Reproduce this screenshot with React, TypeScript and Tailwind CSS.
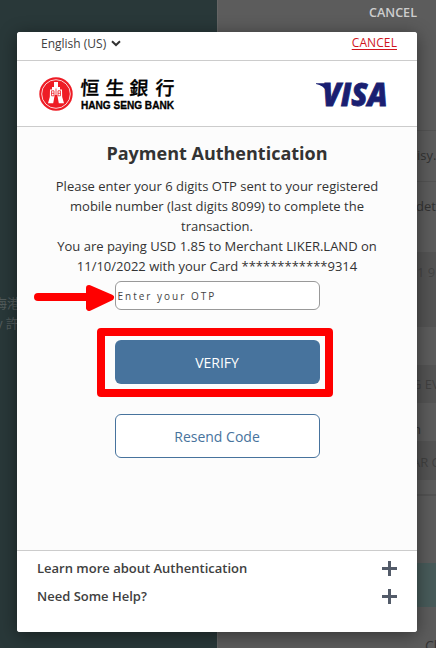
import React from "react";

function HangSengLogo() {
  return (
    <svg width="138" height="38" viewBox="0 0 138 38" className="block overflow-visible" aria-label="Hang Seng Bank">
      <circle cx="17" cy="18" r="16.7" fill="#ee1c25" />
      <circle cx="17" cy="18" r="14.3" fill="none" stroke="#fff" strokeWidth="0.8" />
      <path d="M15 6h4v5h2v2.500h2l.2 7.500 1.800 6.300h-5.200l-1.500-8.300h-2.600l-1.500 8.300H9l1.800-6.300.2-7.500h2V11h2z" fill="#fff" />
      <path d="M17 12.500v8M12.500 14.800h2.500v5h-2.500zM19 14.800h2.500v5H19zM12.500 17.300h2.500M19 17.300h2.500" fill="none" stroke="#ee1c25" strokeWidth="0.8" />
      <g fontFamily="'Noto Sans CJK TC', sans-serif" fontSize="19" fontWeight="500" stroke="#000" strokeWidth="0.3" transform="translate(1 0) skewX(-3)">
        <text x="41" y="18.500">恒</text>
        <text x="66" y="18.500">生</text>
        <text x="90" y="18.500">銀</text>
        <text x="116" y="18.500">行</text>
      </g>
      <text x="42" y="33" textLength="93" lengthAdjust="spacingAndGlyphs" fontSize="11.5" fontWeight="700" stroke="#000" strokeWidth="0.35" fontFamily="'Liberation Sans', sans-serif">HANG SENG BANK</text>
    </svg>
  );
}

function VisaLogo() {
  return (
    <svg width="74" height="28" viewBox="0 0 74 28" className="block overflow-visible" aria-label="Visa">
      <path d="M0 2.300h9.500q2.800 0 3.200 2.500L15 16 10.200 10Q7.500 4.800 0 3.100z" fill="#1a1f71" />
      <text x="6.500" y="25.300" textLength="65" lengthAdjust="spacingAndGlyphs" fontSize="31" fontWeight="800" fontStyle="italic" fill="#1a1f71" stroke="#1a1f71" strokeWidth="0.8" fontFamily="'Open Sans', sans-serif">VISA</text>
    </svg>
  );
}

function HelpRow({ label }: { label: string }) {
  return (
    <div className="flex h-7 items-center justify-between">
      <span className="text-[13px] font-semibold leading-5 text-[#404040]">{label}</span>
      <svg width="15" height="15" viewBox="0 0 15 15" className="block">
        <path d="M7.5 0v15M0 7.5h15" stroke="#535b69" strokeWidth="3" />
      </svg>
    </div>
  );
}

function Backdrop() {
  return (
    <div className="flex h-[648px] w-[436px] overflow-hidden">
      <div className="flex w-[217px] flex-col bg-[#293839] pt-[293px] text-[13px] leading-5 text-[#535c5c]">
        <span className="-ml-1.5 whitespace-nowrap font-['Noto_Sans_CJK_TC',sans-serif]">海港</span>
        <span className="-ml-1 whitespace-nowrap font-['Noto_Sans_CJK_TC',sans-serif]">y 許</span>
      </div>
      <div className="flex w-[219px] flex-col border-l border-[#656565] bg-[#5c5c5c] text-[14px] text-[#333]">
        <div className="flex h-[130px] shrink-0 justify-end pr-[19px] pt-[3px] text-[12.6px] font-semibold leading-5 text-[#cecece]">
          CANCEL
        </div>
        <div className="h-[51px] shrink-0 whitespace-nowrap border-t border-[#535353] pl-[199px] pt-[14px] text-[13px] leading-5">isy.</div>
        <div className="h-[71px] shrink-0 whitespace-nowrap border-t border-[#535353] pl-[198px] pt-[14px] text-[13px] leading-5">det</div>
        <div className="h-[75px] shrink-0 whitespace-nowrap bg-[#545454] pl-[199px] pt-[10px] text-[13px] leading-5 text-[#444]">1 9</div>
        <div className="mt-[38px] h-[38px] shrink-0 whitespace-nowrap bg-[#545454] pl-[194px] pt-[9px] text-[13px] leading-5 text-[#414141]">G EV</div>
        <div className="h-[38px] shrink-0 pl-[195px] pt-4 text-[13px] leading-5">n</div>
        <div className="h-[39px] shrink-0 whitespace-nowrap bg-[#545454] pl-[194px] pt-[11px] text-[13px] leading-5 text-[#414141]">AR C</div>
        <div className="mt-[14px] h-[69px] shrink-0 border-t-2 border-[#535353]" />
        <div className="h-11 shrink-0 bg-[#485b5a]" />
        <div className="h-[41px] shrink-0 whitespace-nowrap pl-[207px] pt-[29px] leading-5">Cl</div>
      </div>
    </div>
  );
}

function Annotations() {
  return (
    <svg width="436" height="648" className="pointer-events-none absolute left-0 top-0">
      <path d="M38 297H90" stroke="#f00" strokeWidth="8" strokeLinecap="round" />
      <path d="M89 288L111 297.500L89 308z" fill="#f00" stroke="#f00" strokeWidth="6" strokeLinejoin="round" />
      <rect x="101" y="332" width="228" height="61" fill="none" stroke="#f00" strokeWidth="8" strokeLinejoin="round" />
    </svg>
  );
}

export default function App() {
  return (
    <main className="relative h-[648px] w-[436px] overflow-hidden font-['Open_Sans','Noto_Sans_CJK_TC',sans-serif]">
      <Backdrop />
      <section className="absolute left-[17px] top-8 flex h-[600px] w-[400px] flex-col overflow-hidden rounded-[3px] bg-[#fcfcfc] text-[#333] shadow-[0_3px_18px_rgba(0,0,0,0.45)]">
        <div className="flex h-[29px] shrink-0 justify-between border-b border-[#ccc] bg-white pl-6 pr-5 pt-px text-[12px] leading-5">
          <button className="flex h-[21px] items-center gap-[5px] text-[#404040]">
            English (US)
            <svg width="10" height="7" viewBox="0 0 10 7"><path d="M1 1.200L5 5L9 1.200" fill="none" stroke="#333" strokeWidth="2" /></svg>
          </button>
          <a className="h-5 tracking-[0.1px] text-[#d0151c] underline underline-offset-2">CANCEL</a>
        </div>
        <header className="flex h-[66px] shrink-0 justify-between border-b border-[#ccc] bg-white pl-[22px] pr-[27px]">
          <div className="pt-[15px]"><HangSengLogo /></div>
          <div className="pt-5"><VisaLogo /></div>
        </header>
        <div className="flex flex-1 flex-col items-center pt-[13px]">
          <h1 className="text-[18px] font-bold leading-[26px]">Payment Authentication</h1>
          <p className="mt-[10px] whitespace-nowrap text-center text-[13px] leading-5">
            Please enter your 6 digits OTP sent to your registered<br />
            mobile number (last digits 8099) to complete the<br />
            transaction.<br />
            You are paying USD 1.85 to Merchant LIKER.LAND on<br />
            11/10/2022 with your Card ************9314
          </p>
          <input
            placeholder="Enter your OTP"
            className="mt-[5px] h-[29px] w-[205px] rounded-[6px] border border-[#999] bg-white px-0.5 text-[10px] tracking-[2px] placeholder:text-[#444]"
          />
          <button className="mt-[30px] h-11 w-[205px] rounded-[6px] bg-[#47739d] text-[14px] text-white">VERIFY</button>
          <button className="mt-[30px] h-11 w-[205px] rounded-[6px] border border-[#47739d] bg-white text-[14px] text-[#47739d]">Resend Code</button>
        </div>
        <footer className="h-[82px] shrink-0 border-t border-[#ccc] bg-white px-5 pt-[3px]">
          <HelpRow label="Learn more about Authentication" />
          <HelpRow label="Need Some Help?" />
        </footer>
      </section>
      <Annotations />
    </main>
  );
}
